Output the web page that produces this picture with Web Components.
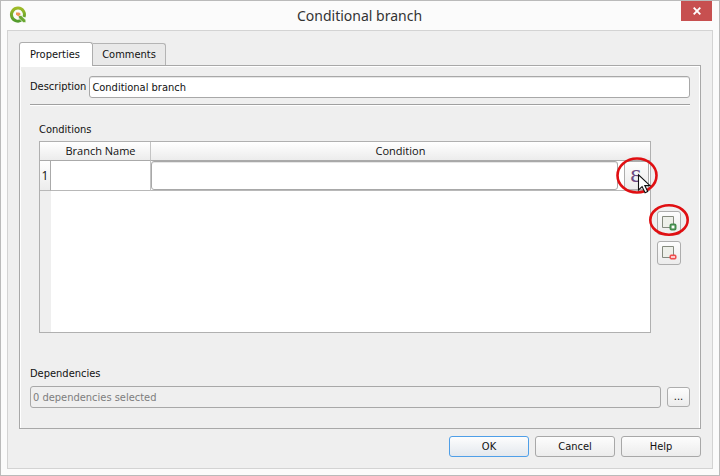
<!DOCTYPE html>
<html lang="en">
<head>
<meta charset="utf-8">
<title>Conditional branch</title>
<style>
  html, body { height: 100%; }
  body { margin: 0; font: 11px/14px "DejaVu Sans Condensed", "Liberation Sans", sans-serif; color: #111; }
</style>
</head>
<body>
<dialog-window heading="Conditional branch">
  <tab-panel>
    <branch-field></branch-field>
    <conditions-editor></conditions-editor>
    <dependencies-field></dependencies-field>
  </tab-panel>
  <push-button slot="actions" default>OK</push-button>
  <push-button slot="actions">Cancel</push-button>
  <push-button slot="actions">Help</push-button>
</dialog-window>

<script>
const base = `
  *, *::before { box-sizing: border-box; }
  button, input { font: inherit; color: inherit; margin: 0; }
  button { padding: 0; border: 1px solid #adadad; border-radius: 3px; background: linear-gradient(#fdfdfd, #ececec); }
  input { display: block; width: 100%; height: 22px; padding: 0 2px; border: 1px solid #a8a8a8; border-radius: 3px; background: #fff; outline: 0; box-shadow: inset 0 1px #e6e6e6; }
`;
function define(name, render) {
  customElements.define(name, class extends HTMLElement {
    connectedCallback() {
      if (this.shadowRoot) return;
      const t = document.createElement('template');
      t.innerHTML = render(this);
      this.attachShadow({ mode: 'open' }).append(t.content.cloneNode(true));
    }
  });
}

define('dialog-window', el => `
  <style>${base}
    :host { box-sizing: border-box; display: flex; flex-direction: column; min-height: 100%; padding: 0 6px 6px; border: 1px solid #bababa; background: #fbfbfb; }
    header { display: grid; grid-template-columns: 31px 1fr 31px; height: 29px; padding-right: 1px; }
    header svg { display: block; }
    .logo { margin: 5px 0 0 2px; }
    h1 { margin: 0; font: 14px/29px "Noto Sans", "Open Sans", sans-serif; color: #333; text-align: center; }
    .close { display: grid; place-items: center; width: 31px; height: 20px; border: 0; border-radius: 0; background: #c75050; }
    main { flex: 1; display: flex; flex-direction: column; padding: 11px; border: 1px solid #d3d3d3; background: #efefef; }
    footer { display: flex; justify-content: flex-end; gap: 6px; padding-top: 7px; }
  </style>
  <header>
    <svg class="logo" width="18" height="18" viewBox="0 0 18 18" aria-hidden="true">
      <defs><linearGradient id="g" x2="0" y2="1"><stop stop-color="#9fbb28"/><stop offset="1" stop-color="#529b2d"/></linearGradient></defs>
      <path d="M13 13.700A6.500 6.500 0 1 1 15 11" fill="none" stroke="url(#g)" stroke-width="3"/>
      <path d="M9.500 9.500h2.700l4.600 4.600v2.400h-2.600L9.500 12z" fill="#69a831" stroke="#fbfbfb" stroke-width=".6"/>
      <path d="M7 6.500h3.200l1.600 1.600-2.300 2.500L7 8.800z" fill="#ef9352"/>
    </svg>
    <h1>${el.getAttribute('heading')}</h1>
    <button class="close" aria-label="Close"><svg width="8" height="8" viewBox="0 0 8 8"><path d="M.7.700 7.300 7.300M7.300.700.7 7.300" stroke="#fff" stroke-width="1.900"/></svg></button>
  </header>
  <main><slot></slot><footer><slot name="actions"></slot></footer></main>
`);

define('tab-panel', () => `
  <style>${base}
    :host { flex: 1; display: flex; flex-direction: column; }
    nav { display: flex; align-items: flex-end; height: 24px; margin-bottom: -1px; z-index: 1; }
    button { height: 22px; margin-bottom: 1px; width: 73px; border: 1px solid #b4b4b4; border-bottom: 0; border-left: 0; border-radius: 0 3px 0 0; background: #e9e9e9; }
    button[aria-selected=true] { width: 74px; height: 24px; margin-bottom: 0; padding-right: 2px; border: 1px solid #adadad; border-bottom: 0; border-radius: 3px 3px 0 0; background: #fff; }
    section { flex: 1; display: flex; flex-direction: column; padding: 10px 10px 20px 10px; border: 1px solid #a8a8a8; box-shadow: inset 1px 1px #fff, inset -1px 0 #fff; }
  </style>
  <nav role="tablist"><button role="tab" aria-selected="true">Properties</button><button role="tab" aria-selected="false">Comments</button></nav>
  <section role="tabpanel"><slot></slot></section>
`);

define('branch-field', () => `
  <style>${base}
    :host { display: flex; align-items: center; gap: 3px; padding-bottom: 6px; border-bottom: 1px solid #a0a0a0; box-shadow: 0 1px #fff; }
    label { flex: none; }
  </style>
  <label for="d">Description</label><input id="d" value="Conditional branch">
`);

define('conditions-editor', () => `
  <style>${base}
    :host { flex: 1; display: flex; flex-direction: column; padding: 18px 9px 0 9px; }
    h2 { margin: 0 0 4px; font: inherit; }
    .row { flex: 1; display: flex; gap: 6px; }
    .grid { flex: 1; border: 1px solid #b0b0b0; background: linear-gradient(90deg, #efefef 11px, #fff 11px); }
    table { width: 100%; table-layout: fixed; border-collapse: separate; border-spacing: 0; }
    th, td { padding: 0; height: 30px; background: #fff; font-weight: 400; border-bottom: 1px solid #b8b8b8; }
    thead th { height: 19px; font: 11px/16px "Open Sans", "Noto Sans", sans-serif; text-align: center; background: linear-gradient(#fff, #ececec); border-bottom: 1px solid #aaa; }
    thead th:nth-child(2), tbody td { border-right: 1px solid #c4c4c4; }
    tbody td:last-child, thead th:last-child { border-right: 0; }
    tbody th { border-right: 1px solid #aaa; background: linear-gradient(#fff, #ececec); font: 12px/16px "Open Sans", sans-serif; }
    .edit { display: flex; gap: 6px; height: 29px; padding-right: 1px; }
    .edit input { flex: 1; width: 0; height: 29px; }
    .expr { flex: none; position: relative; width: 25px; color: #6c4a82; font: 25px/22px "Liberation Serif", serif; }
    .expr > span { display: block; height: 26px; padding-right: 2px; }
    .tools { display: flex; flex-direction: column; gap: 6px; padding-top: 70px; width: 24px; }
    .tools button { position: relative; height: 24px; width: 24px; }
    .tools .icon { display: block; margin: auto; }
    .ring, .cursor { position: absolute; overflow: visible; pointer-events: none; z-index: 2; }
    .expr .ring { left: -9px; top: -5px; }
    .tools .ring { left: -9px; top: -8px; }
    .cursor { left: 13px; top: 12px; }
  </style>
  <h2>Conditions</h2>
  <div class="row">
    <div class="grid">
      <table>
        <colgroup><col style="width:11px"><col style="width:100px"><col></colgroup>
        <thead><tr><th></th><th scope="col">Branch Name</th><th scope="col">Condition</th></tr></thead>
        <tbody><tr><th scope="row">1</th><td></td><td>
          <div class="edit"><input aria-label="Condition">
            <button class="expr" aria-label="Expression"><span>ε</span>
              <svg class="ring" width="42" height="37" viewBox="0 0 42 37"><ellipse cx="21" cy="18.500" rx="19.500" ry="17" fill="none" stroke="#e00f12" stroke-width="2.600"/></svg>
              <svg class="cursor" width="13" height="20" viewBox="0 0 13 20"><path d="M.5.800V16l3.600-3.400 3 6.100 2.600-1.200-2.900-5.900H12z" fill="#fff" stroke="#111" stroke-width="1.100"/></svg>
            </button></div>
        </td></tr></tbody>
      </table>
    </div>
    <div class="tools">
      <button aria-label="Add condition">
        <svg class="icon" width="16" height="16" viewBox="0 0 16 16"><path d="M1.500 1.500h11v11h-11z" fill="#eef0ea" stroke="#858a7e"/><rect x="9.500" y="9.500" width="5" height="5" rx="1" fill="#e8f5e8" stroke="#438b4c" stroke-width="2"/><path d="M12 11v2M11 12h2" stroke="#fff"/></svg>
        <svg class="ring" width="40" height="32" viewBox="0 0 40 32"><ellipse cx="20" cy="16" rx="18.700" ry="14.700" fill="none" stroke="#e00f12" stroke-width="2.600"/></svg>
      </button>
      <button aria-label="Remove condition">
        <svg class="icon" width="16" height="16" viewBox="0 0 16 16"><path d="M1.500 1.500h11v11h-11z" fill="#eef0ea" stroke="#858a7e"/><rect x="9" y="10" width="6" height="4" rx="1" fill="#f05454" stroke="#ee4848"/><path d="M10 12h4" stroke="#fff" stroke-width="1.400"/></svg>
      </button>
    </div>
  </div>
`);

define('dependencies-field', () => `
  <style>${base}
    :host { display: block; padding-top: 34px; }
    label { display: block; margin-bottom: 5px; }
    div { display: flex; align-items: center; gap: 6px; }
    input { background: #efefef; color: #7d7d7d; box-shadow: none; }
    button { flex: none; width: 23px; height: 20px; }
  </style>
  <label for="p">Dependencies</label>
  <div><input id="p" value="0 dependencies selected" readonly><button aria-label="Select dependencies">...</button></div>
`);

define('push-button', el => `
  <style>${base}
    :host { display: block; }
    button { display: block; width: 80px; height: 21px; border-color: #a8a8a8; }
    :host([default]) button { border-color: #4f9fe8; background: linear-gradient(#fdfdfd, #e3e8ee); }
  </style>
  <button><slot></slot></button>
`);
</script>
</body>
</html>
